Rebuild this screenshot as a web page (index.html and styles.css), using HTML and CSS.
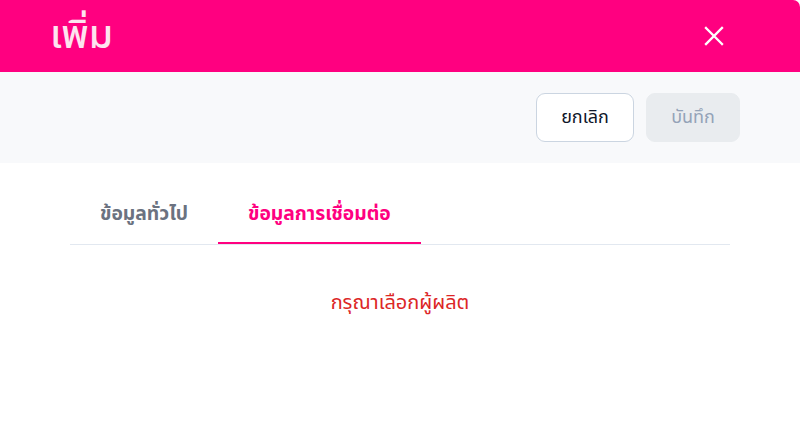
FILE: index.html
```html
<!DOCTYPE html>
<html lang="th">
<head>
    <meta charset="UTF-8">
    <meta name="viewport" content="width=device-width, initial-scale=1.0">
    <title>เพิ่ม</title>
    <link rel="stylesheet" href="styles.css">
</head>
<body>
    <div class="modal">
        <div class="modal-header">
            <h1 class="modal-title">เพิ่ม</h1>
            <button class="close-btn" type="button" aria-label="ปิด">
                <svg width="20" height="20" viewBox="0 0 20 20">
                    <path d="M2 2 L18 18 M18 2 L2 18" stroke="#fff" stroke-width="2.3" stroke-linecap="square"/>
                </svg>
            </button>
        </div>

        <div class="toolbar">
            <button class="btn btn-cancel" type="button">ยกเลิก</button>
            <button class="btn btn-save" type="button" disabled>บันทึก</button>
        </div>

        <div class="tabs">
            <div class="tab">ข้อมูลทั่วไป</div>
            <div class="tab active">ข้อมูลการเชื่อมต่อ</div>
        </div>

        <p class="notice">กรุณาเลือกผู้ผลิต</p>
    </div>
</body>
</html>
```

FILE: styles.css
```css
body {
    margin: 0;
    background: #fff;
    font-family: "Noto Sans Thai", "Noto Sans", "DejaVu Sans", sans-serif;
}
.modal {
    width: 800px;
    height: 439px;
    background: #fff;
    overflow: hidden;
}
.modal-header {
    height: 72px;
    background: #ff0080;
    border-top-right-radius: 7px;
    display: flex;
    align-items: center;
    justify-content: space-between;
    padding: 0 76px 0 50px;
}
.modal-title {
    margin: 0;
    color: #fde4ef;
    font-size: 39px;
    font-weight: 500;
}
.close-btn {
    background: none;
    border: 0;
    padding: 0;
    display: flex;
    cursor: pointer;
}
.toolbar {
    height: 91px;
    background: #f8f9fb;
    display: flex;
    align-items: center;
    justify-content: flex-end;
    gap: 12px;
    padding-right: 60px;
    box-sizing: border-box;
}
.btn {
    height: 49px;
    border-radius: 9px;
    font-family: inherit;
    font-size: 18px;
    padding: 0;
}
.btn-cancel {
    background: #fff;
    border: 1px solid #cbd5e1;
    color: #0f172a;
    width: 98px;
}
.btn-save {
    background: #e9ecef;
    border: 1px solid #e9ecef;
    color: #94a3b8;
    width: 94px;
}
.tabs {
    display: flex;
    margin: 21px 70px 0;
    border-bottom: 1px solid #e2e8f0;
}
.tab {
    height: 60px;
    padding: 0 30px;
    display: flex;
    align-items: center;
    font-size: 19.3px;
    font-weight: 700;
    color: #6b7280;
    box-sizing: border-box;
}
.tab.active {
    color: #ff0080;
    border-bottom: 2px solid #ff0080;
    margin-bottom: -1px;
    padding-top: 2px;
}
.notice {
    margin: 43px 0 0;
    text-align: center;
    color: #dc2626;
    font-size: 20px;
}
```
